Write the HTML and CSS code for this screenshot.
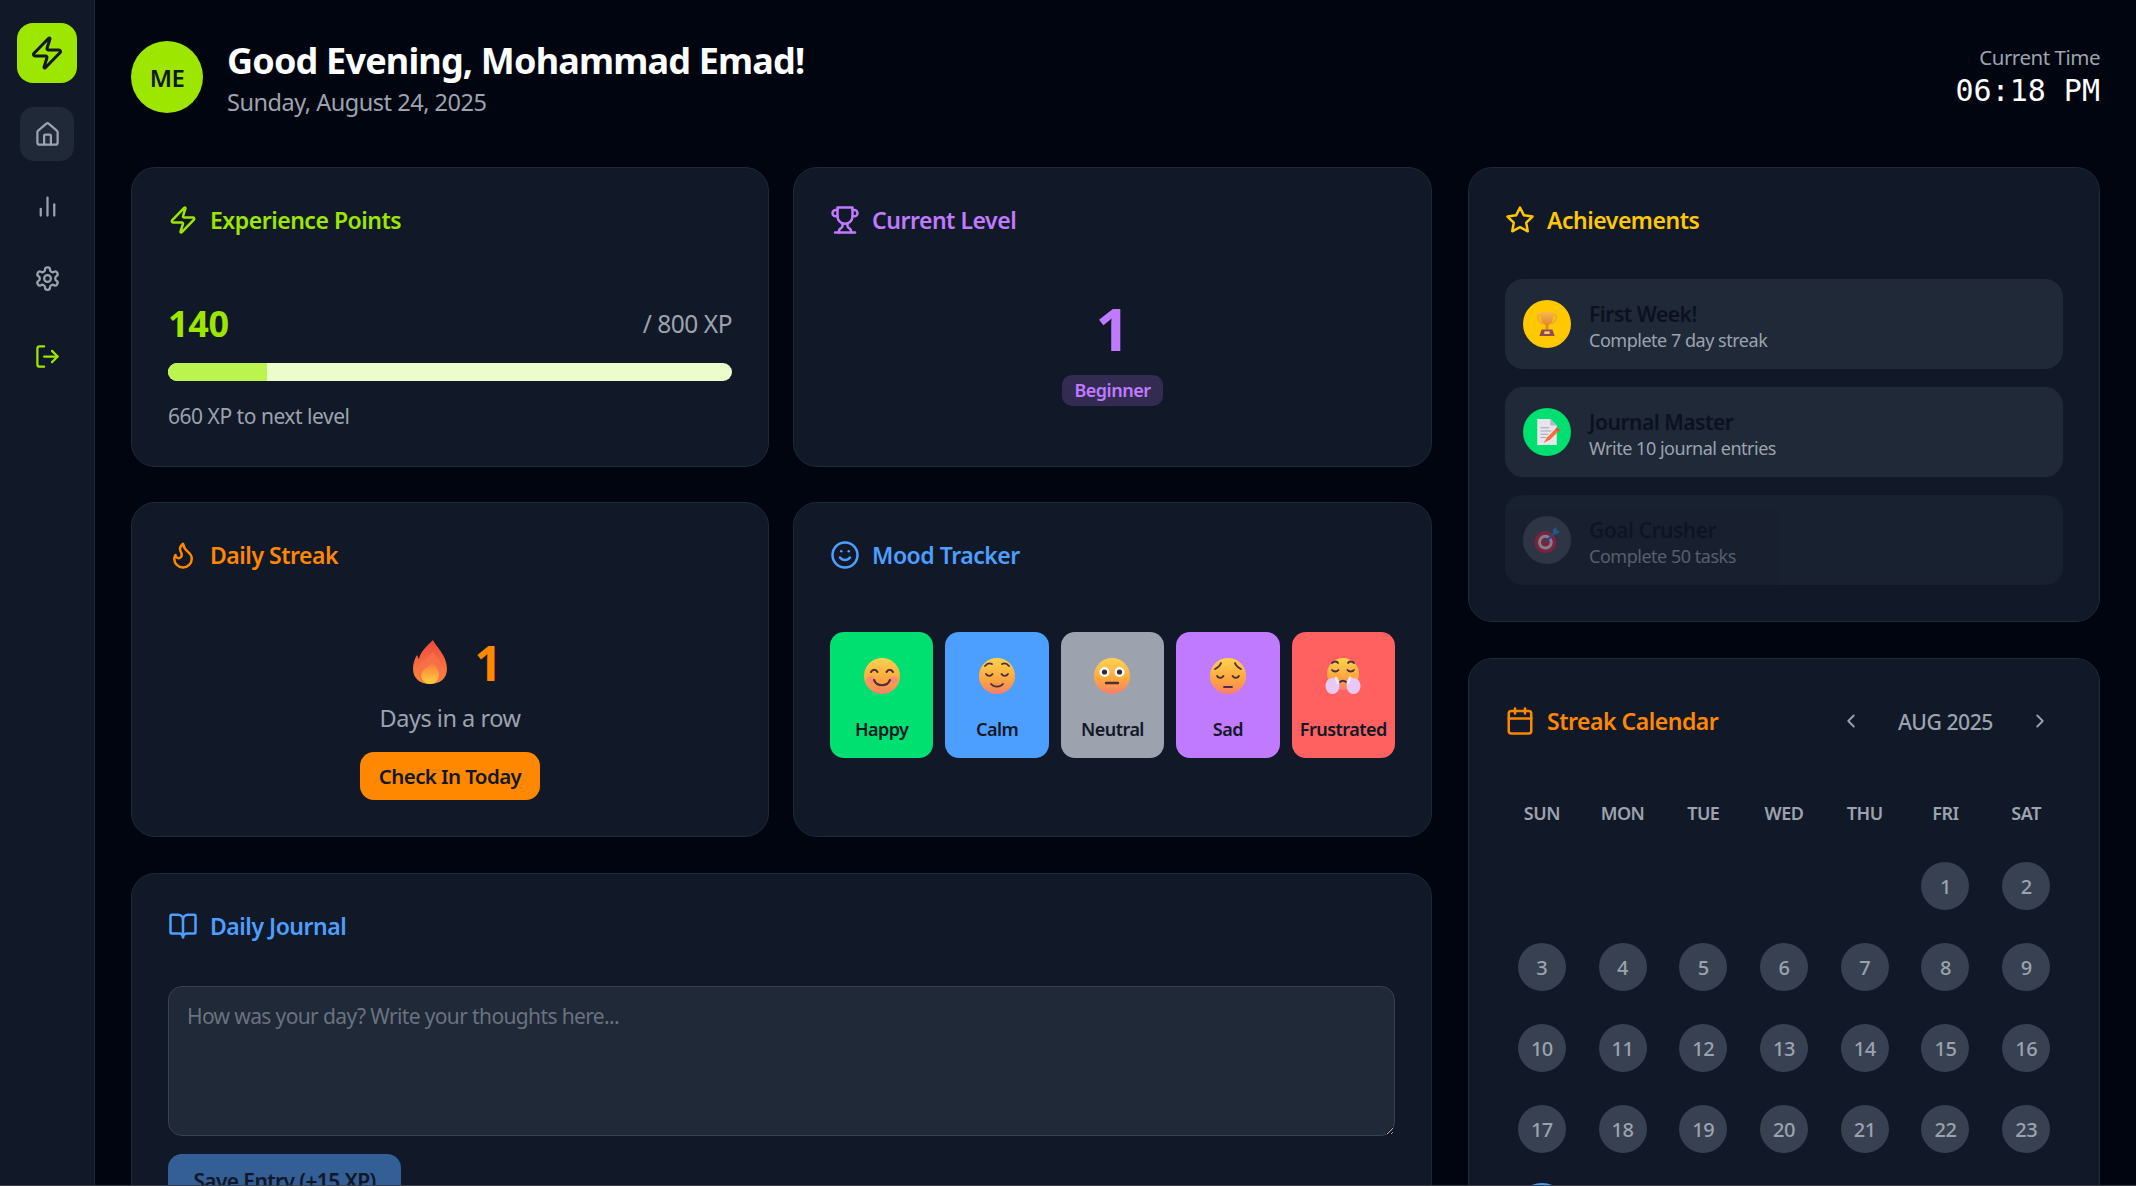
FILE: index.html
```html
<!DOCTYPE html>
<html lang="en">
<head>
<meta charset="utf-8">
<title>Dashboard</title>
<link rel="stylesheet" href="styles.css">
</head>
<body>
<svg class="sprite" width="0" height="0" aria-hidden="true">
  <defs>
    <linearGradient id="skin" x1="0" y1="0" x2="0" y2="1"><stop offset="0" stop-color="#ffd34d"/><stop offset=".6" stop-color="#fda63f"/><stop offset="1" stop-color="#f77f6a"/></linearGradient>
    <linearGradient id="flameOut" x1="0" y1="0" x2="0" y2="1"><stop offset="0" stop-color="#f0483e"/><stop offset="1" stop-color="#fb8a3c"/></linearGradient>
    <linearGradient id="flameIn" x1="0" y1="0" x2="0" y2="1"><stop offset="0" stop-color="#fb7a3a"/><stop offset="1" stop-color="#ffd23c"/></linearGradient>
    <linearGradient id="cup" x1="0" y1="0" x2="0" y2="1"><stop offset="0" stop-color="#f8b84a"/><stop offset="1" stop-color="#e2862e"/></linearGradient>
  </defs>
  <symbol id="i-zap" viewBox="0 0 24 24"><path d="M4 14a1 1 0 0 1-.78-1.63l9.9-10.2a.5.5 0 0 1 .86.46l-1.92 6.02A1 1 0 0 0 13 10h7a1 1 0 0 1 .78 1.63l-9.9 10.2a.5.5 0 0 1-.86-.46l1.92-6.02A1 1 0 0 0 11 14z"/></symbol>
  <symbol id="i-house" viewBox="0 0 24 24"><path d="M15 21v-8a1 1 0 0 0-1-1h-4a1 1 0 0 0-1 1v8"/><path d="M3 10a2 2 0 0 1 .709-1.528l7-5.999a2 2 0 0 1 2.582 0l7 5.999A2 2 0 0 1 21 10v9a2 2 0 0 1-2 2H5a2 2 0 0 1-2-2z"/></symbol>
  <symbol id="i-chart" viewBox="0 0 24 24"><path d="M18 20V10"/><path d="M12 20V4"/><path d="M6 20v-6"/></symbol>
  <symbol id="i-gear" viewBox="0 0 24 24"><path d="M12.22 2h-.44a2 2 0 0 0-2 2v.18a2 2 0 0 1-1 1.73l-.43.25a2 2 0 0 1-2 0l-.15-.08a2 2 0 0 0-2.73.73l-.22.38a2 2 0 0 0 .73 2.73l.15.1a2 2 0 0 1 1 1.72v.51a2 2 0 0 1-1 1.74l-.15.09a2 2 0 0 0-.73 2.73l.22.38a2 2 0 0 0 2.73.73l.15-.08a2 2 0 0 1 2 0l.43.25a2 2 0 0 1 1 1.73V20a2 2 0 0 0 2 2h.44a2 2 0 0 0 2-2v-.18a2 2 0 0 1 1-1.73l.43-.25a2 2 0 0 1 2 0l.15.08a2 2 0 0 0 2.73-.73l.22-.39a2 2 0 0 0-.73-2.73l-.15-.08a2 2 0 0 1-1-1.74v-.5a2 2 0 0 1 1-1.74l.15-.09a2 2 0 0 0 .73-2.73l-.22-.38a2 2 0 0 0-2.73-.73l-.15.08a2 2 0 0 1-2 0l-.43-.25a2 2 0 0 1-1-1.73V4a2 2 0 0 0-2-2z"/><circle cx="12" cy="12" r="3"/></symbol>
  <symbol id="i-logout" viewBox="0 0 24 24"><path d="M9 21H5a2 2 0 0 1-2-2V5a2 2 0 0 1 2-2h4"/><path d="M16 17l5-5-5-5"/><path d="M21 12H9"/></symbol>
  <symbol id="i-trophy" viewBox="0 0 24 24"><path d="M6 9H4.5a2.5 2.5 0 0 1 0-5H6"/><path d="M18 9h1.5a2.5 2.5 0 0 0 0-5H18"/><path d="M4 22h16"/><path d="M10 14.66V17c0 .55-.47.98-.97 1.21C7.85 18.75 7 20.24 7 22"/><path d="M14 14.66V17c0 .55.47.98.97 1.21C16.15 18.75 17 20.24 17 22"/><path d="M18 2H6v7a6 6 0 0 0 12 0V2Z"/></symbol>
  <symbol id="i-star" viewBox="0 0 24 24"><path d="M12 2l3.09 6.26L22 9.27l-5 4.87 1.18 6.88L12 17.77l-6.18 3.25L7 14.14 2 9.27l6.91-1.01L12 2z"/></symbol>
  <symbol id="i-flame" viewBox="0 0 24 24"><path d="M8.5 14.5A2.5 2.5 0 0 0 11 12c0-1.38-.5-2-1-3-1.072-2.143-.224-4.054 2-6 .5 2.5 2 4.9 4 6.5 2 1.6 3 3.5 3 5.5a7 7 0 1 1-14 0c0-1.153.433-2.294 1-3a2.5 2.5 0 0 0 2.5 2.5z"/></symbol>
  <symbol id="i-smile" viewBox="0 0 24 24"><circle cx="12" cy="12" r="10"/><path d="M8 14s1.5 2 4 2 4-2 4-2"/><path d="M9 9h.01"/><path d="M15 9h.01"/></symbol>
  <symbol id="i-book" viewBox="0 0 24 24"><path d="M12 7v14"/><path d="M3 18a1 1 0 0 1-1-1V4a1 1 0 0 1 1-1h5a4 4 0 0 1 4 4 4 4 0 0 1 4-4h5a1 1 0 0 1 1 1v13a1 1 0 0 1-1 1h-6a3 3 0 0 0-3 3 3 3 0 0 0-3-3z"/></symbol>
  <symbol id="i-cal" viewBox="0 0 24 24"><path d="M8 2v4"/><path d="M16 2v4"/><rect x="3" y="4" width="18" height="18" rx="2"/><path d="M3 10h18"/></symbol>
  <symbol id="i-left" viewBox="0 0 24 24"><path d="M15 18l-6-6 6-6"/></symbol>
  <symbol id="i-right" viewBox="0 0 24 24"><path d="M9 18l6-6-6-6"/></symbol>
  <symbol id="e-happy" viewBox="0 0 36 36"><circle cx="18" cy="18" r="18" fill="url(#skin)"/><ellipse cx="7" cy="22" rx="5" ry="3.5" fill="#f77f8a" opacity=".6"/><ellipse cx="29" cy="22" rx="5" ry="3.5" fill="#f77f8a" opacity=".6"/><path d="M7 14c1.500-3 5-3 6.500 0M22.500 14c1.500-3 5-3 6.500 0M10 22c3 7 13 7 16 0" fill="none" stroke="#4a2f3a" stroke-width="2" stroke-linecap="round"/></symbol>
  <symbol id="e-calm" viewBox="0 0 36 36"><circle cx="18" cy="18" r="18" fill="url(#skin)"/><path d="M6 8c2-2.500 5-3 7-2M23 6c2-1 5-.5 7 2M7 16c1.500 2.500 5 2.500 6.500 0M22.500 16c1.500 2.500 5 2.500 6.500 0M12 26c3 3.500 9 3.500 12 0" fill="none" stroke="#4a2f3a" stroke-width="1.800" stroke-linecap="round"/></symbol>
  <symbol id="e-neutral" viewBox="0 0 36 36"><circle cx="18" cy="18" r="18" fill="url(#skin)"/><circle cx="10.500" cy="14" r="5" fill="#fff"/><circle cx="25.500" cy="14" r="5" fill="#fff"/><circle cx="10.500" cy="14" r="2.600" fill="#3a2630"/><circle cx="25.500" cy="14" r="2.600" fill="#3a2630"/><path d="M12 25h12" stroke="#4a2f3a" stroke-width="2.400" stroke-linecap="round"/></symbol>
  <symbol id="e-sad" viewBox="0 0 36 36"><circle cx="18" cy="18" r="18" fill="url(#skin)"/><path d="M5 11c2-1 5-3 6-6M25 5c1 3 4 5 6 6M7 18c1.500 2.500 5 2.500 6.500 0M22.500 18c1.500 2.500 5 2.500 6.500 0M14 29h8" fill="none" stroke="#4a2f3a" stroke-width="1.800" stroke-linecap="round"/></symbol>
  <symbol id="e-frus" viewBox="0 0 36 36"><ellipse cx="18" cy="16" rx="16" ry="16" fill="url(#skin)"/><path d="M7 5c2-2 5-2 6 0M23 5c1-2 4-2 6 0M7 12c1.500 2 5 2 6.500 0M22.500 12c1.500 2 5 2 6.500 0M14 25c2-3 6-3 8 0" fill="none" stroke="#4a2f3a" stroke-width="1.800" stroke-linecap="round"/><ellipse cx="7.500" cy="28" rx="7" ry="8" fill="#e6c9f5"/><ellipse cx="28.500" cy="28" rx="7" ry="8" fill="#e6c9f5"/><path d="M11 20l2 5M25 20l-2 5" stroke="#f3e4fb" stroke-width="3" stroke-linecap="round"/></symbol>
  <symbol id="e-fire" viewBox="0 0 34 44"><path d="M20 0c3 7 14 15 14 29 0 9-7 15-17 15S0 38 0 29c0-6 2-11 4-14 1 2 1 3 2 4C7 12 14 6 20 0z" fill="url(#flameOut)"/><path d="M20 12c4 6 10 11 10 19 0 8-6 13-13 13S5 39 5 31c0-8 10-12 15-19z" fill="#f9714a" opacity=".85"/><path d="M19 23c4 3 7 7 7 12 0 5-4 9-9 9s-9-4-9-9c0-5 7-7 11-12z" fill="url(#flameIn)"/></symbol>
  <symbol id="e-trophy" viewBox="0 0 24 24"><path d="M7 4H3.500c0 5 2 7 5 7.500M17 4h3.500c0 5-2 7-5 7.500" fill="none" stroke="#f2a93c" stroke-width="1.800"/><path d="M6 1h12c0 7-1 12-6 12S6 8 6 1z" fill="url(#cup)"/><rect x="10.700" y="12" width="2.600" height="5" fill="#e2862e"/><path d="M7 17h10l2 6H5z" fill="#8f4a52"/><rect x="9.500" y="18.800" width="5" height="2.400" fill="#f5cf72"/></symbol>
  <symbol id="e-memo" viewBox="0 0 24 24"><path d="M3 0h12l6 6v18H3z" fill="#e8e4ec"/><path d="M15 0l6 6h-6z" fill="#b9b3c2"/><path d="M6 8h8M6 11h10M6 14h7M6 17h5" stroke="#a9a3b3" stroke-width="1"/><path d="M9 22l3-5 9-9 3 2-9 9z" fill="#f2703c"/><path d="M21 8l3 2-1.500 1.800-3-2z" fill="#f24e4e"/></symbol>
  <symbol id="e-dart" viewBox="0 0 24 24"><circle cx="10.500" cy="14" r="10" fill="#e02f55"/><circle cx="10.500" cy="14" r="6.800" fill="#f1e6ea"/><circle cx="10.500" cy="14" r="4" fill="#e02f55"/><path d="M10.500 14L20 4.500" stroke="#3a80d8" stroke-width="2"/><path d="M17 3l3-3 1 3 3 1-3 3-3-1z" fill="#2f9be8"/></symbol>
</svg>

<div class="app">
  <aside class="sidebar">
    <div class="logo"><svg class="icon logo-icon"><use href="#i-zap"/></svg></div>
    <nav class="nav">
      <a class="nav-btn active"><svg class="icon"><use href="#i-house"/></svg></a>
      <a class="nav-btn"><svg class="icon"><use href="#i-chart"/></svg></a>
      <a class="nav-btn"><svg class="icon"><use href="#i-gear"/></svg></a>
      <a class="nav-btn logout"><svg class="icon"><use href="#i-logout"/></svg></a>
    </nav>
  </aside>

  <main class="main">
    <header class="header">
      <div class="greeting">
        <div class="avatar">ME</div>
        <div>
          <h1 class="hello">Good Evening, Mohammad Emad!</h1>
          <p class="date">Sunday, August 24, 2025</p>
        </div>
      </div>
      <div class="clock">
        <div class="clock-label">Current Time</div>
        <div class="clock-value">06:18 PM</div>
      </div>
    </header>

    <div class="dashboard">
      <div class="col-left">
        <div class="row row-top">
          <section class="card">
            <h2 class="card-title lime"><svg class="icon title-icon"><use href="#i-zap"/></svg>Experience Points</h2>
            <div class="xp-head"><span class="xp-value">140</span><span class="xp-max">/ 800 XP</span></div>
            <div class="xp-track"><div class="xp-fill" style="width:17.5%"></div></div>
            <p class="xp-next">660 XP to next level</p>
          </section>
          <section class="card">
            <h2 class="card-title purple"><svg class="icon title-icon"><use href="#i-trophy"/></svg>Current Level</h2>
            <div class="level">
              <div class="level-num">1</div>
              <span class="level-badge">Beginner</span>
            </div>
          </section>
        </div>
        <div class="row row-mid">
          <section class="card">
            <h2 class="card-title orange"><svg class="icon title-icon"><use href="#i-flame"/></svg>Daily Streak</h2>
            <div class="streak">
              <div class="streak-count"><svg class="fire"><use href="#e-fire"/></svg><span>1</span></div>
              <p class="streak-label">Days in a row</p>
              <button class="checkin">Check In Today</button>
            </div>
          </section>
          <section class="card">
            <h2 class="card-title blue"><svg class="icon title-icon"><use href="#i-smile"/></svg>Mood Tracker</h2>
            <div class="moods">
              <button class="mood m-happy"><svg class="mood-face"><use href="#e-happy"/></svg><span>Happy</span></button>
              <button class="mood m-calm"><svg class="mood-face"><use href="#e-calm"/></svg><span>Calm</span></button>
              <button class="mood m-neutral"><svg class="mood-face"><use href="#e-neutral"/></svg><span>Neutral</span></button>
              <button class="mood m-sad"><svg class="mood-face"><use href="#e-sad"/></svg><span>Sad</span></button>
              <button class="mood m-frus"><svg class="mood-face"><use href="#e-frus"/></svg><span>Frustrated</span></button>
            </div>
          </section>
        </div>
        <section class="card journal">
          <h2 class="card-title blue"><svg class="icon title-icon"><use href="#i-book"/></svg>Daily Journal</h2>
          <textarea class="journal-input" placeholder="How was your day? Write your thoughts here..."></textarea>
          <button class="save">Save Entry (+15 XP)</button>
        </section>
      </div>

      <div class="col-right">
        <section class="card">
          <h2 class="card-title yellow"><svg class="icon title-icon"><use href="#i-star"/></svg>Achievements</h2>
          <div class="achievements">
            <div class="ach">
              <div class="ach-icon a-gold"><svg class="ach-emoji"><use href="#e-trophy"/></svg></div>
              <div class="ach-text"><div class="ach-name">First Week!</div><div class="ach-desc">Complete 7 day streak</div></div>
            </div>
            <div class="ach">
              <div class="ach-icon a-green"><svg class="ach-emoji"><use href="#e-memo"/></svg></div>
              <div class="ach-text"><div class="ach-name">Journal Master</div><div class="ach-desc">Write 10 journal entries</div></div>
            </div>
            <div class="ach locked">
              <div class="ach-icon a-gray"><svg class="ach-emoji"><use href="#e-dart"/></svg></div>
              <div class="ach-text"><div class="ach-name">Goal Crusher</div><div class="ach-desc">Complete 50 tasks</div></div>
            </div>
          </div>
        </section>
        <section class="card calendar">
          <div class="cal-head">
            <h2 class="card-title orange"><svg class="icon title-icon"><use href="#i-cal"/></svg>Streak Calendar</h2>
            <div class="cal-nav">
              <svg class="icon chev"><use href="#i-left"/></svg>
              <span class="cal-month">AUG 2025</span>
              <svg class="icon chev"><use href="#i-right"/></svg>
            </div>
          </div>
          <div class="cal-grid">
            <div class="dow">SUN</div><div class="dow">MON</div><div class="dow">TUE</div><div class="dow">WED</div><div class="dow">THU</div><div class="dow">FRI</div><div class="dow">SAT</div>
            <div class="cell"></div><div class="cell"></div><div class="cell"></div><div class="cell"></div><div class="cell"></div>
            <div class="cell"><span class="day">1</span></div><div class="cell"><span class="day">2</span></div>
            <div class="cell"><span class="day">3</span></div><div class="cell"><span class="day">4</span></div><div class="cell"><span class="day">5</span></div><div class="cell"><span class="day">6</span></div><div class="cell"><span class="day">7</span></div><div class="cell"><span class="day">8</span></div><div class="cell"><span class="day">9</span></div>
            <div class="cell"><span class="day">10</span></div><div class="cell"><span class="day">11</span></div><div class="cell"><span class="day">12</span></div><div class="cell"><span class="day">13</span></div><div class="cell"><span class="day">14</span></div><div class="cell"><span class="day">15</span></div><div class="cell"><span class="day">16</span></div>
            <div class="cell"><span class="day">17</span></div><div class="cell"><span class="day">18</span></div><div class="cell"><span class="day">19</span></div><div class="cell"><span class="day">20</span></div><div class="cell"><span class="day">21</span></div><div class="cell"><span class="day">22</span></div><div class="cell"><span class="day">23</span></div>
            <div class="cell"><span class="day today">24</span></div><div class="cell"><span class="day">25</span></div><div class="cell"><span class="day">26</span></div><div class="cell"><span class="day">27</span></div><div class="cell"><span class="day">28</span></div><div class="cell"><span class="day">29</span></div><div class="cell"><span class="day">30</span></div>
          </div>
        </section>
      </div>
    </div>
  </main>
</div>
</body>
</html>
```

FILE: styles.css
```css
* { box-sizing: border-box; }
html, body { margin: 0; height: 100%; overflow: hidden; }
body {
  background: #010510;
  color: #fff;
  font-family: "Noto Sans", "Open Sans", sans-serif;
  letter-spacing: -0.48px;
}
body::after {
  content: "";
  position: fixed;
  left: 0; right: 0; bottom: 0;
  height: 1px;
  background: #3b4048;
}
.sprite { position: absolute; }
h1, h2, p { margin: 0; }

.icon {
  fill: none;
  stroke: currentColor;
  stroke-width: 2;
  stroke-linecap: round;
  stroke-linejoin: round;
  flex: none;
}

.app { display: flex; height: 1186px; overflow: hidden; }

/* sidebar */
.sidebar {
  width: 95px;
  flex: none;
  background: #111827;
  border-right: 1px solid #1f2937;
  padding-top: 23px;
  display: flex;
  flex-direction: column;
  align-items: center;
}
.logo {
  width: 60px; height: 60px;
  border-radius: 16px;
  background: #9de600;
  color: #111827;
  display: flex; align-items: center; justify-content: center;
  margin-bottom: 24px;
}
.logo-icon { width: 36px; height: 36px; }
.nav { display: flex; flex-direction: column; gap: 18px; }
.nav-btn {
  width: 54px; height: 54px;
  border-radius: 14px;
  color: #9ca3af;
  display: flex; align-items: center; justify-content: center;
}
.nav-btn .icon { width: 27px; height: 27px; }
.nav-btn.active { background: #1f2937; }
.nav-btn.logout { color: #9de600; margin-top: 6px; }

/* main */
.main { flex: 1; min-width: 0; padding: 41px 36px 0 36px; }
.header {
  display: flex;
  justify-content: space-between;
  align-items: flex-start;
  height: 72px;
  margin-bottom: 54px;
}
.greeting { display: flex; align-items: flex-start; gap: 24px; }
.avatar {
  width: 72px; height: 72px;
  border-radius: 50%;
  background: #9de600;
  color: #111827;
  font-size: 24px;
  font-weight: 600;
  display: flex; align-items: center; justify-content: center;
}
.hello { font-size: 36px; font-weight: 700; line-height: 44px; margin-top: -2px; letter-spacing: -0.82px; }
.date { font-size: 23.500px; line-height: 32px; color: #9ca3af; margin-top: 3px; }
.clock { text-align: right; margin-top: 3px; }
.clock-label { font-size: 20.500px; line-height: 26px; color: #9ca3af; }
.clock-value {
  font-family: "DejaVu Sans Mono", monospace;
  font-size: 30px;
  line-height: 38px;
  letter-spacing: 0;
  margin-top: 2px;
}

.dashboard { display: grid; grid-template-columns: 1fr 632px; gap: 36px; align-items: start; }
.col-left, .col-right { display: flex; flex-direction: column; gap: 36px; min-width: 0; }
.row { display: grid; grid-template-columns: 638px 1fr; gap: 24px; }
.row-top { height: 299px; }
.row-mid { height: 335px; }

.card {
  background: #111827;
  border: 1px solid #1f2937;
  border-radius: 24px;
  padding: 36px;
  min-width: 0;
}
.card-title {
  display: flex;
  align-items: center;
  gap: 12px;
  font-size: 23px;
  font-weight: 600;
  line-height: 32px;
}
.title-icon { width: 30px; height: 30px; }
.lime { color: #9de600; }
.purple { color: #c07aff; }
.orange { color: #ff8800; }
.blue { color: #4d9fff; }
.yellow { color: #ffc800; }

/* XP */
.xp-head {
  display: flex;
  justify-content: space-between;
  align-items: center;
  margin-top: 64px;
  height: 46px;
}
.xp-value { font-size: 36px; font-weight: 700; color: #9de600; letter-spacing: -0.36px; }
.xp-max { font-size: 24.500px; color: #9ca3af; }
.xp-track { height: 18px; margin-top: 17px; border-radius: 9px; background: #ecfccb; overflow: hidden; }
.xp-fill { height: 100%; background: #bcf44f; }
.xp-next { font-size: 21px; line-height: 28px; color: #9ca3af; margin-top: 21px; }

/* level */
.level { display: flex; flex-direction: column; align-items: center; margin-top: 56px; }
.level-num { font-size: 60px; font-weight: 700; line-height: 72px; color: #c07aff; }
.level-badge {
  margin-top: 11px;
  font-size: 18px;
  font-weight: 600;
  line-height: 31px;
  padding: 0 12px;
  border-radius: 10px;
  color: #c07aff;
  background: rgba(192, 122, 255, 0.2);
}

/* streak */
.streak { display: flex; flex-direction: column; align-items: center; margin-top: 61px; }
.streak-count {
  display: flex; align-items: center; gap: 28px;
  height: 60px;
  padding-left: 14px;
  font-size: 48px; font-weight: 700; color: #ff8800;
}
.fire { width: 34px; height: 44px; }
.streak-label { font-size: 23.500px; line-height: 34px; color: #9ca3af; margin-top: 9px; }
.checkin {
  margin-top: 17px;
  height: 48px; width: 180px;
  border: 0; border-radius: 14px;
  background: #ff8800;
  color: #111827;
  font: 600 20.500px "Noto Sans", sans-serif;
  letter-spacing: -0.6px;
}

/* mood */
.moods { display: grid; grid-template-columns: repeat(5, 1fr); gap: 12px; margin-top: 61px; }
.mood {
  height: 126px;
  border: 0;
  border-radius: 14px;
  padding: 26px 0 0;
  display: flex; flex-direction: column; align-items: center;
  color: #111827;
  font: 600 18px "Noto Sans", sans-serif;
  letter-spacing: -0.54px;
}
.mood span { margin-top: 22px; line-height: 26px; }
.mood-face { width: 36px; height: 36px; }
.m-happy { background: #00e070; }
.m-calm { background: #4d9fff; }
.m-neutral { background: #9ca3af; }
.m-sad { background: #c07aff; }
.m-frus { background: #ff6060; }

/* journal */
.journal-input {
  display: block;
  width: 100%;
  height: 150px;
  margin-top: 44px;
  padding: 15px 18px;
  background: #1f2937;
  border: 1px solid #374151;
  border-radius: 14px;
  color: #fff;
  font: 21px "Noto Sans", sans-serif;
  letter-spacing: -0.63px;
}
.journal-input::placeholder { color: #6b7280; opacity: 1; }
.save {
  margin-top: 18px;
  height: 54px; width: 233px;
  border: 0; border-radius: 14px;
  background: #335e96;
  color: #111827;
  font: 600 21px "Noto Sans", sans-serif;
  letter-spacing: -0.63px;
}

/* achievements */
.achievements { display: flex; flex-direction: column; gap: 18px; margin-top: 43px; }
.ach {
  display: flex; align-items: center; gap: 18px;
  height: 90px;
  padding: 0 18px;
  border-radius: 18px;
  background: #1f2937;
}
.ach.locked { opacity: 0.5; }
.ach-icon {
  width: 48px; height: 48px;
  border-radius: 50%;
  display: flex; align-items: center; justify-content: center;
}
.a-gold { background: #ffc800; }
.a-green { background: #00e070; }
.a-gray { background: #4b5563; }
.ach-emoji { width: 26px; height: 26px; }
.ach-text { padding-top: 5px; }
.ach-name { font-size: 21px; font-weight: 600; line-height: 27px; color: #0b1120; }
.ach-desc { font-size: 18px; line-height: 25px; color: #9ca3af; }

/* calendar */
.calendar { padding-bottom: 0; }
.cal-head { display: flex; justify-content: space-between; align-items: center; height: 52px; }
.cal-nav { display: flex; align-items: center; gap: 36px; padding-right: 12px; color: #9ca3af; }
.chev { width: 22px; height: 22px; }
.cal-month { font-size: 21.200px; font-weight: 500; }
.cal-grid {
  display: grid;
  grid-template-columns: repeat(7, 1fr);
  grid-template-rows: 50px;
  grid-auto-rows: 74px;
  gap: 7px;
  margin-top: 45px;
}
.dow {
  display: flex; align-items: flex-start; justify-content: center;
  padding-top: 9px;
  font-size: 18px; font-weight: 600; color: #9ca3af;
}
.cell { display: flex; align-items: center; justify-content: center; }
.day {
  width: 48px; height: 48px;
  border-radius: 50%;
  background: #374151;
  color: #9ca3af;
  font-size: 20px; font-weight: 500;
  display: flex; align-items: center; justify-content: center;
}
.today { box-shadow: 0 0 0 3px #4d9fff; }
```
